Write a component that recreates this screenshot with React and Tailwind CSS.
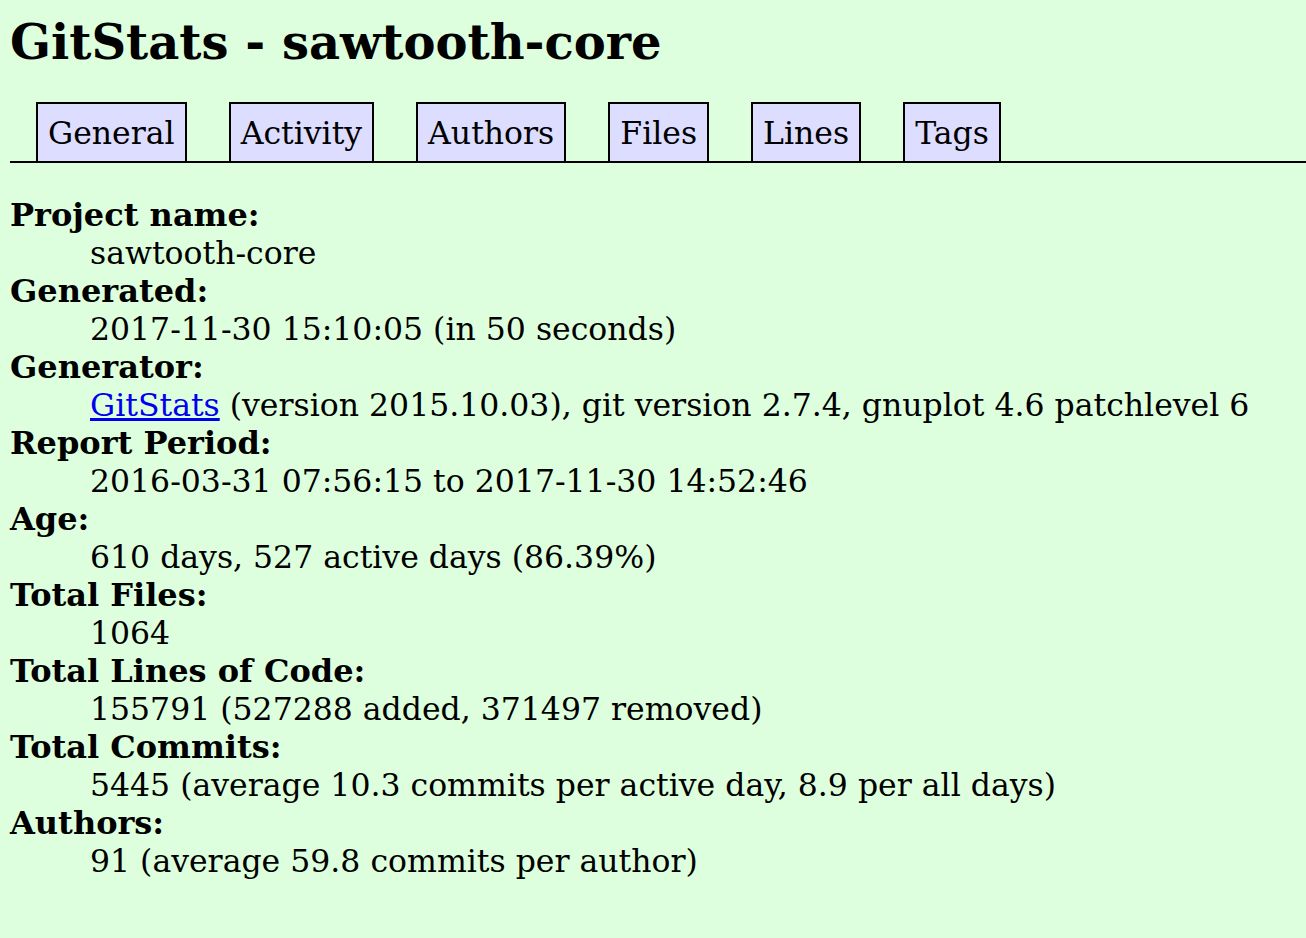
export default function App() {
  const tabs = ["General", "Activity", "Authors", "Files", "Lines", "Tags"];
  const rows = [
    ["Project name:", "sawtooth-core"],
    ["Generated:", "2017-11-30 15:10:05 (in 50 seconds)"],
    ["Generator:", null],
    ["Report Period:", "2016-03-31 07:56:15 to 2017-11-30 14:52:46"],
    ["Age:", "610 days, 527 active days (86.39%)"],
    ["Total Files:", "1064"],
    ["Total Lines of Code:", "155791 (527288 added, 371497 removed)"],
    ["Total Commits:", "5445 (average 10.3 commits per active day, 8.9 per all days)"],
    ["Authors:", "91 (average 59.8 commits per author)"],
  ];
  return (
    <div
      className="min-h-[938px] bg-[#ddffdd] pl-[10px] text-black"
      style={{ fontFamily: '"DejaVu Serif", serif' }}
    >
      <h1 className="pt-[14px] text-[48px] font-bold leading-[56px]">GitStats - sawtooth-core</h1>
      <div className="mt-[32px] flex h-[61px] items-end gap-[42px] border-b-2 border-black pl-[26px]">
        {tabs.map((t) => (
          <div
            key={t}
            className="flex h-[59px] items-center border-2 border-b-0 border-black bg-[#ddddff] px-[10px] text-[31.5px] leading-[38px]"
          >
            {t}
          </div>
        ))}
      </div>
      <dl className="mt-[33px] text-[31.5px] leading-[38px]">
        {rows.map(([k, v]) => (
          <div key={k}>
            <dt className="text-[32px] font-bold">{k}</dt>
            <dd className="ml-[80px]">
              {v === null ? (
                <>
                  <a href="#" className="text-[#0000ee] underline">GitStats</a> (version 2015.10.03), git version 2.7.4, gnuplot 4.6 patchlevel 6
                </>
              ) : (
                v
              )}
            </dd>
          </div>
        ))}
      </dl>
    </div>
  );
}
